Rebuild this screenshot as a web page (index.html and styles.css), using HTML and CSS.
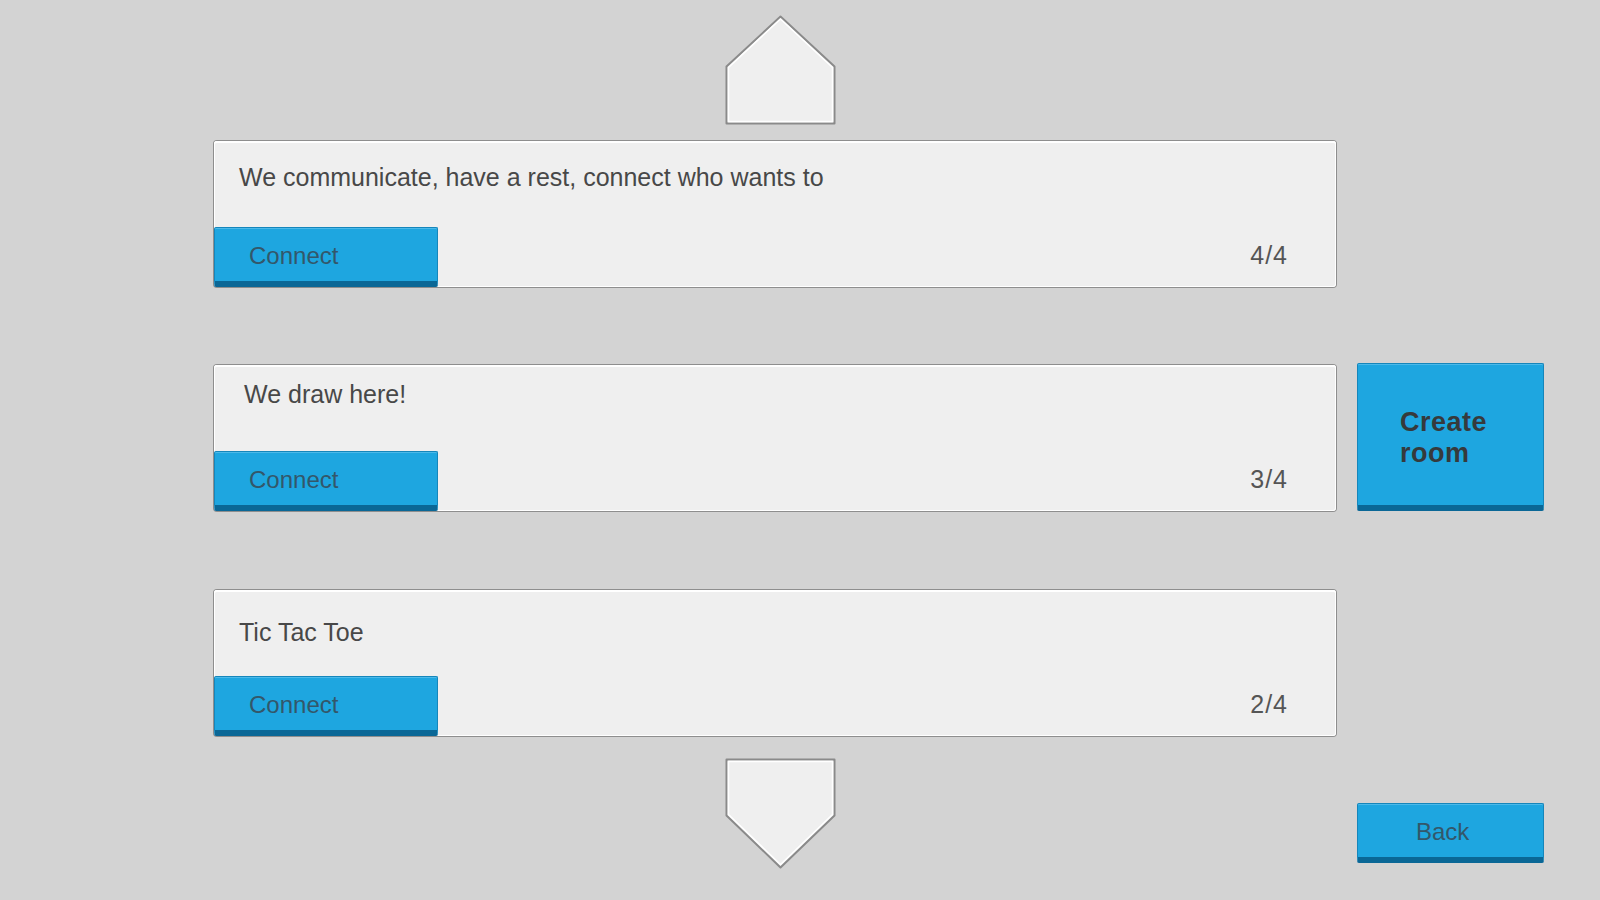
FILE: index.html
```html
<!DOCTYPE html>
<html lang="en">
<head>
<meta charset="utf-8">
<title>Rooms</title>
<link rel="stylesheet" href="styles.css">
</head>
<body>
<div class="screen">
  <div class="rooms">
    <button class="arrow arrow-up" aria-label="Scroll up">
      <svg width="111" height="111" viewBox="0 0 111 111">
        <polygon points="55.5,1.5 1.5,51.5 1.5,108.5 109.5,108.5 109.5,51.5" fill="#efefef" stroke="#8a8a8a" stroke-width="2" stroke-linejoin="round"/>
        <polygon points="55.5,4 3.5,52.5 3.5,106.5 107.5,106.5 107.5,52.5" fill="none" stroke="#ffffff" stroke-width="1.5" stroke-linejoin="round"/>
      </svg>
    </button>

    <div class="room room-a">
      <div class="room-title">We communicate, have a rest, connect who wants to</div>
      <div class="room-footer">
        <button class="btn btn-connect">Connect</button>
        <span class="room-count">4/4</span>
      </div>
    </div>

    <div class="room room-b">
      <div class="room-title">We draw here!</div>
      <div class="room-footer">
        <button class="btn btn-connect">Connect</button>
        <span class="room-count">3/4</span>
      </div>
    </div>

    <div class="room room-c">
      <div class="room-title">Tic Tac Toe</div>
      <div class="room-footer">
        <button class="btn btn-connect">Connect</button>
        <span class="room-count">2/4</span>
      </div>
    </div>

    <button class="arrow arrow-down" aria-label="Scroll down">
      <svg width="111" height="111" viewBox="0 0 111 111">
        <polygon points="1.5,1.5 109.5,1.5 109.5,57.5 55.5,109.5 1.5,57.5" fill="#efefef" stroke="#8a8a8a" stroke-width="2" stroke-linejoin="round"/>
        <polygon points="3.5,3.5 107.5,3.5 107.5,56.5 55.5,106.5 3.5,56.5" fill="none" stroke="#ffffff" stroke-width="1.5" stroke-linejoin="round"/>
      </svg>
    </button>
  </div>

  <div class="side">
    <button class="btn btn-create">Create<br>room</button>
    <button class="btn btn-back">Back</button>
  </div>
</div>
</body>
</html>
```

FILE: styles.css
```css
html, body {
  margin: 0;
  padding: 0;
}

body {
  width: 1600px;
  height: 900px;
  overflow: hidden;
  background: #d3d3d3;
  font-family: "Liberation Sans", Arial, sans-serif;
}

.screen {
  display: grid;
  grid-template-columns: 1122px 187px;
  column-gap: 21px;
  padding-left: 214px;
  height: 900px;
  box-sizing: border-box;
}

.rooms {
  display: flex;
  flex-direction: column;
  padding-top: 15px;
}

.arrow {
  display: block;
  width: 111px;
  height: 111px;
  margin: 0 0 0 511px;
  padding: 0;
  border: 0;
  background: none;
}

.arrow svg {
  display: block;
}

.arrow-up {
  margin-bottom: 15px;
}

.arrow-down {
  margin-top: 22px;
}

.room {
  display: flex;
  flex-direction: column;
  justify-content: space-between;
  height: 146px;
  background: #efefef;
  border-radius: 3px;
  box-shadow: 0 0 0 1px #8e8e8e, inset 0 0 0 1px #ffffff, inset 0 2px 0 #ffffff;
}

.room-b {
  margin-top: 78px;
}

.room-c {
  margin-top: 79px;
}

.room-title {
  font-size: 25px;
  line-height: 30px;
  color: #484848;
  padding-left: 25px;
  white-space: nowrap;
}

.room-a .room-title {
  padding-top: 21px;
}

.room-b .room-title {
  padding-top: 14px;
  padding-left: 30px;
}

.room-c .room-title {
  padding-top: 27px;
}

.room-footer {
  display: flex;
  justify-content: space-between;
  align-items: flex-end;
}

.room-count {
  font-size: 25px;
  line-height: 30px;
  letter-spacing: 1px;
  color: #555555;
  margin-right: 48px;
  margin-bottom: 17px;
}

.btn {
  display: block;
  box-sizing: border-box;
  margin: 0;
  font-family: "Liberation Sans", Arial, sans-serif;
  font-size: 24px;
  line-height: 30px;
  text-align: left;
  color: #33576a;
  background: #1ea6e0;
  border: 1px solid #1586bb;
  border-bottom: 6px solid #0a6796;
  border-radius: 2px;
  box-shadow: inset 0 1px 0 #4cb9e9;
}

.btn-connect {
  width: 224px;
  height: 60px;
  padding: 13px 0 10px 34px;
}

.side {
  display: flex;
  flex-direction: column;
  padding-top: 363px;
}

.btn-create {
  width: 187px;
  height: 148px;
  padding: 43px 0 36px 42px;
  font-size: 27px;
  font-weight: bold;
  line-height: 31px;
  letter-spacing: 0.5px;
  color: #363a3c;
}

.btn-back {
  width: 187px;
  height: 60px;
  margin-top: 292px;
  padding: 13px 0 10px 58px;
}
```
